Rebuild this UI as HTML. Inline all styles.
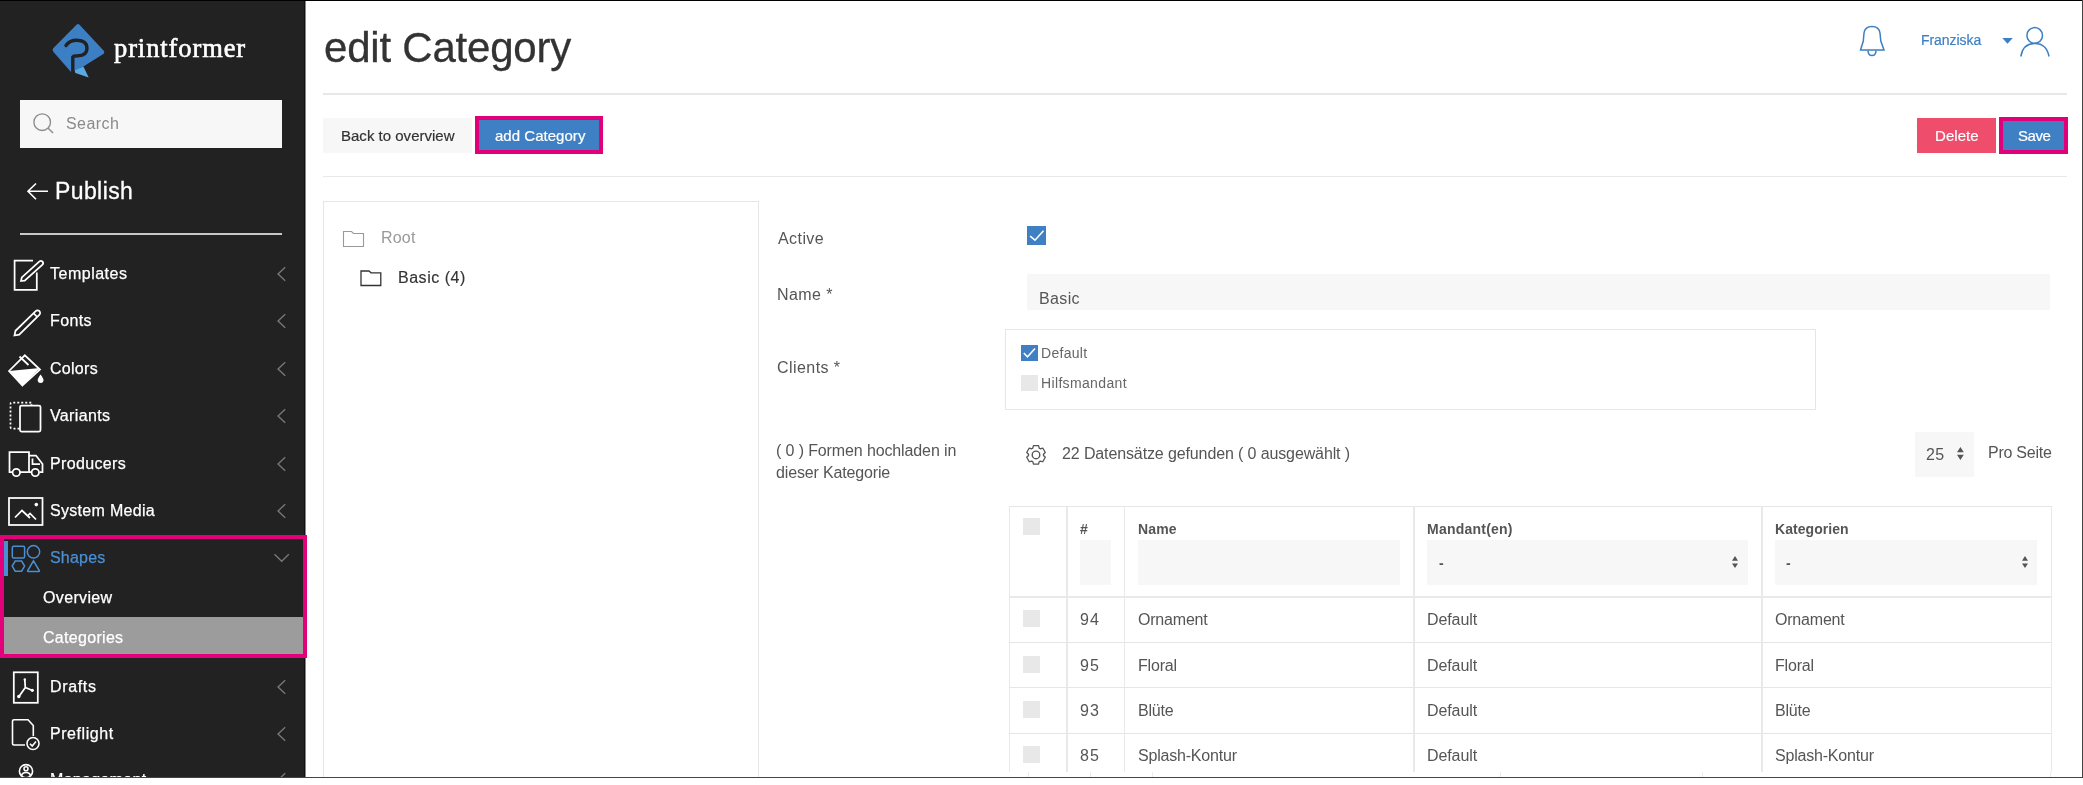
<!DOCTYPE html>
<html><head><meta charset="utf-8">
<style>
html,body{margin:0;padding:0;width:2083px;height:785px;overflow:hidden;background:#fff;}
body{position:relative;font-family:"Liberation Sans", sans-serif;}
.t{position:absolute;line-height:1;white-space:nowrap;will-change:transform;}
.r{position:absolute;}
svg.r{overflow:visible;}
</style></head><body>
<div class="r" style="left:0px;top:0px;width:304px;height:785px;background:#222;"></div>
<div class="r" style="left:304px;top:0px;width:1px;height:785px;background:#111;"></div>
<div class="r" style="left:305px;top:0px;width:1px;height:785px;background:#888;"></div>
<svg class="r" style="left:0;top:0" width="306" height="100" viewBox="0 0 306 100">
<path d="M76.5 24.8 Q78 23.3 79.5 24.8 L103.5 50.5 Q105.5 53 102.5 54.5 L83.4 66.6 L74.5 69.9 L71 72 L53.5 52 Q51.5 49.5 54 47.5 Z" fill="#3d7fc4"/>
<path d="M74.5 69.9 L83.4 66.6 L88.7 77.6 L75.4 73 Z" fill="#5aa8e4"/>
<path d="M66 45.5 Q69.5 40.3 77 40.3 Q86.8 40.5 87 48 Q87 55.6 78 55.8 Q73.5 55.8 72.8 57 L72.8 73" stroke="#222" stroke-width="3.4" fill="none" stroke-linecap="round"/>
</svg>
<div class="t" style="left:113.5px;top:35px;font-size:26.5px;color:#fff;font-weight:400;letter-spacing:0.9px;font-family:'Liberation Serif', serif;-webkit-text-stroke:0.6px #fff;">printformer</div>
<div class="r" style="left:20px;top:100px;width:262px;height:48px;background:#f7f7f7;"></div>
<svg class="r" style="left:30px;top:110px" width="30" height="30" viewBox="30 110 30 30">
<circle cx="42.2" cy="122.2" r="8.3" stroke="#8a8a8a" stroke-width="1.3" fill="none"/>
<path d="M48.2 128.2 L53 133" stroke="#8a8a8a" stroke-width="1.4" fill="none"/>
</svg>
<div class="t" style="left:66.1px;top:116px;font-size:16px;color:#8a8a8a;font-weight:400;letter-spacing:0.45px;font-family:'Liberation Sans', sans-serif;">Search</div>
<svg class="r" style="left:20px;top:175px" width="40" height="30" viewBox="20 175 40 30">
<path d="M48 191.3 L28.5 191.3 M36 183.5 L28 191.3 L36 199.3" stroke="#fff" stroke-width="1.6" fill="none"/>
</svg>
<div class="t" style="left:54.5px;top:180px;font-size:23px;color:#fff;font-weight:400;letter-spacing:0.4px;font-family:'Liberation Sans', sans-serif;-webkit-text-stroke:0.3px #fff">Publish</div>
<div class="r" style="left:20px;top:233px;width:262px;height:2px;background:#c8c8c8;"></div>
<div class="t" style="left:50px;top:266px;font-size:16px;color:#fff;font-weight:400;letter-spacing:0.5px;font-family:'Liberation Sans', sans-serif;-webkit-text-stroke:0.25px #fff">Templates</div>
<svg class="r" style="left:270px;top:264px" width="20" height="20" viewBox="270 264 20 20"><path d="M285.2 267.2 L278 274 L285.2 280.8" stroke="#7a7a7a" stroke-width="1.3" fill="none"/></svg>
<div class="t" style="left:50px;top:313px;font-size:16px;color:#fff;font-weight:400;letter-spacing:0.4px;font-family:'Liberation Sans', sans-serif;-webkit-text-stroke:0.25px #fff">Fonts</div>
<svg class="r" style="left:270px;top:311.4px" width="20" height="20" viewBox="270 311.4 20 20"><path d="M285.2 314.59999999999997 L278 321.4 L285.2 328.2" stroke="#7a7a7a" stroke-width="1.3" fill="none"/></svg>
<div class="t" style="left:50px;top:361px;font-size:16px;color:#fff;font-weight:400;letter-spacing:0.28px;font-family:'Liberation Sans', sans-serif;-webkit-text-stroke:0.25px #fff">Colors</div>
<svg class="r" style="left:270px;top:358.6px" width="20" height="20" viewBox="270 358.6 20 20"><path d="M285.2 361.8 L278 368.6 L285.2 375.40000000000003" stroke="#7a7a7a" stroke-width="1.3" fill="none"/></svg>
<div class="t" style="left:50px;top:408px;font-size:16px;color:#fff;font-weight:400;letter-spacing:0.35px;font-family:'Liberation Sans', sans-serif;-webkit-text-stroke:0.25px #fff">Variants</div>
<svg class="r" style="left:270px;top:406.1px" width="20" height="20" viewBox="270 406.1 20 20"><path d="M285.2 409.3 L278 416.1 L285.2 422.90000000000003" stroke="#7a7a7a" stroke-width="1.3" fill="none"/></svg>
<div class="t" style="left:50px;top:456px;font-size:16px;color:#fff;font-weight:400;letter-spacing:0.35px;font-family:'Liberation Sans', sans-serif;-webkit-text-stroke:0.25px #fff">Producers</div>
<svg class="r" style="left:270px;top:453.6px" width="20" height="20" viewBox="270 453.6 20 20"><path d="M285.2 456.8 L278 463.6 L285.2 470.40000000000003" stroke="#7a7a7a" stroke-width="1.3" fill="none"/></svg>
<div class="t" style="left:50px;top:503px;font-size:16px;color:#fff;font-weight:400;letter-spacing:0.3px;font-family:'Liberation Sans', sans-serif;-webkit-text-stroke:0.25px #fff">System Media</div>
<svg class="r" style="left:270px;top:500.70000000000005px" width="20" height="20" viewBox="270 500.70000000000005 20 20"><path d="M285.2 503.90000000000003 L278 510.70000000000005 L285.2 517.5" stroke="#7a7a7a" stroke-width="1.3" fill="none"/></svg>
<div class="t" style="left:50px;top:679px;font-size:16px;color:#fff;font-weight:400;letter-spacing:0.65px;font-family:'Liberation Sans', sans-serif;-webkit-text-stroke:0.25px #fff">Drafts</div>
<svg class="r" style="left:270px;top:676.8px" width="20" height="20" viewBox="270 676.8 20 20"><path d="M285.2 680.0 L278 686.8 L285.2 693.5999999999999" stroke="#7a7a7a" stroke-width="1.3" fill="none"/></svg>
<div class="t" style="left:50px;top:726px;font-size:16px;color:#fff;font-weight:400;letter-spacing:0.55px;font-family:'Liberation Sans', sans-serif;-webkit-text-stroke:0.25px #fff">Preflight</div>
<svg class="r" style="left:270px;top:723.8px" width="20" height="20" viewBox="270 723.8 20 20"><path d="M285.2 727.0 L278 733.8 L285.2 740.5999999999999" stroke="#7a7a7a" stroke-width="1.3" fill="none"/></svg>
<div class="t" style="left:50px;top:772px;font-size:16px;color:#fff;font-weight:400;letter-spacing:0.3px;font-family:'Liberation Sans', sans-serif;-webkit-text-stroke:0.25px #fff">Management</div>
<svg class="r" style="left:270px;top:770px" width="20" height="20" viewBox="270 770 20 20"><path d="M285.2 773.2 L278 780 L285.2 786.8" stroke="#7a7a7a" stroke-width="1.3" fill="none"/></svg>
<svg class="r" style="left:0;top:240px" width="60" height="545" viewBox="0 240 60 545">
<g stroke="#fff" stroke-width="1.75" fill="none">
<!-- templates -->
<path d="M33 260.7 L14.6 260.7 L14.6 289.9 L36.8 289.9 L36.8 272.5"/>
<path d="M21 281 L24.7 280.6 L42.5 264.6 A2.2 2.2 0 0 0 39.5 261.4 L21.8 277.4 Z"/>
<!-- fonts -->
<path d="M14.5 335.5 L19.2 334.6 L39.3 314.9 A2.6 2.6 0 0 0 35.7 311.1 L15.5 330.8 Z M33.5 313.2 L37.2 317"/>
<!-- colors bucket -->
<path d="M9 371 L24.8 355.3 L40 369.5 L22.4 385.6 Z"/>
<path d="M19.5 356.5 L28.5 365"/>
<!-- variants -->
<rect x="20" y="405.5" width="20.5" height="26" rx="1.5"/>
<path d="M19.5 428.5 L12 428.5 Q10.5 428.5 10.5 427 L10.5 404 Q10.5 402.5 12 402.5 L31.5 402.5 L31.5 405" stroke-dasharray="2 2"/>
<!-- producers truck -->
<path d="M12.5 472 L9.5 472 L9.5 452 L29 452 L29 472 L31 472 M20 472 L28 472"/>
<path d="M29 455.5 L36 455.5 L42.5 464 L42.5 472 L39.5 472"/>
<path d="M32.5 458.5 L32.5 464 L40 464"/>
<circle cx="16.3" cy="472.5" r="3.7"/>
<circle cx="35.3" cy="472.5" r="3.7"/>
<!-- system media -->
<rect x="9" y="498" width="33.5" height="27"/>
<path d="M15 517.5 L22 510.5 L30 518 M28 515.5 L30 513.5 L36 519.5"/>
<!-- drafts -->
<rect x="13.8" y="672.3" width="24" height="30.5"/>
<path d="M24.8 680 L25.3 687.5 L19 696.5 M25.3 687.5 L32 690.3"/>
</g><g fill="#fff"><circle cx="24.8" cy="679.5" r="1.2"/><circle cx="18.8" cy="696.5" r="1.7"/><circle cx="32.3" cy="690.3" r="1.6"/></g><g stroke="#fff" stroke-width="1.6" fill="none">
<!-- preflight -->
<path d="M25 745 L14 745 Q12.5 745 12.5 743.5 L12.5 721 Q12.5 719.8 14 719.8 L28 719.8 L33.3 725.5 L33.3 736"/>
<circle cx="33" cy="743.5" r="6"/>
<path d="M30 743.8 L32.2 746 L36 741.5"/>
<!-- management -->
<circle cx="26" cy="771.2" r="6.6"/>
<circle cx="26" cy="768.8" r="2"/>
<path d="M21.5 776 Q22 772.5 26 772.5 Q30 772.5 30.5 776"/>
</g>
<g fill="#fff">
<path d="M9 371 L40 368 L22.4 385.6 Z"/>
<path d="M40.6 374.5 Q43.5 378.5 43.5 380 A2.9 2.9 0 0 1 37.7 380 Q37.7 378.5 40.6 374.5 Z"/>
<circle cx="36.3" cy="504.6" r="1.8"/>
</g>
</svg>
<div class="r" style="left:0px;top:535px;width:307px;height:123px;background:transparent;border:4px solid #e3007b;box-sizing:border-box"></div>
<div class="r" style="left:4px;top:541px;width:4px;height:35px;background:#4a8fd4;"></div>
<svg class="r" style="left:0;top:540px" width="60" height="40" viewBox="0 540 60 40">
<g stroke="#4a8fd4" stroke-width="1.5" fill="none">
<rect x="12.3" y="546.2" width="12.3" height="11.8" rx="1.5"/>
<circle cx="33.5" cy="551.8" r="6.2"/>
<path d="M15.2 561 L21.6 561 L24.6 566 L21.6 571.2 L15.2 571.2 L12.2 566 Z"/>
<path d="M33.5 560.8 L39.4 570.8 Q39.6 571.5 38.8 571.5 L28.2 571.5 Q27.4 571.5 27.6 570.8 Z"/>
</g></svg>
<div class="t" style="left:50px;top:550px;font-size:16px;color:#4a8fd4;font-weight:400;letter-spacing:0.2px;font-family:'Liberation Sans', sans-serif;-webkit-text-stroke:0.25px #4a8fd4">Shapes</div>
<svg class="r" style="left:270px;top:545px" width="25" height="25" viewBox="270 545 25 25"><path d="M274.5 554.3 L281.7 561.3 L288.8 554.3" stroke="#7a7a7a" stroke-width="1.3" fill="none"/></svg>
<div class="t" style="left:43px;top:590px;font-size:16px;color:#fff;font-weight:400;letter-spacing:0.35px;font-family:'Liberation Sans', sans-serif;-webkit-text-stroke:0.25px #fff">Overview</div>
<div class="r" style="left:4px;top:617px;width:299px;height:37px;background:#9c9c9c;"></div>
<div class="t" style="left:43px;top:630px;font-size:16px;color:#fff;font-weight:400;letter-spacing:0.3px;font-family:'Liberation Sans', sans-serif;-webkit-text-stroke:0.25px #fff">Categories</div>
<div class="t" style="left:323.6px;top:27px;font-size:42px;color:#333;font-weight:400;letter-spacing:-0.21px;font-family:'Liberation Sans', sans-serif;-webkit-text-stroke:0.3px #333">edit Category</div>
<div class="r" style="left:323px;top:93px;width:1744px;height:2px;background:#e8e8e8;"></div>
<div class="r" style="left:323px;top:118px;width:149px;height:35px;background:#f7f7f7;"></div>
<div class="t" style="left:340.5px;top:128px;font-size:15px;color:#333;font-weight:400;letter-spacing:0.01px;font-family:'Liberation Sans', sans-serif;-webkit-text-stroke:0.2px #333">Back to overview</div>
<div class="r" style="left:475px;top:116px;width:128px;height:38px;background:#3f80c4;border:4px solid #e0007a;box-sizing:border-box"></div>
<div class="t" style="left:494.7px;top:128px;font-size:15px;color:#fff;font-weight:400;letter-spacing:0.03px;font-family:'Liberation Sans', sans-serif;-webkit-text-stroke:0.2px #fff">add Category</div>
<div class="r" style="left:1917px;top:118px;width:79px;height:35px;background:#ef4d6c;"></div>
<div class="t" style="left:1934.8px;top:128px;font-size:15px;color:#fff;font-weight:400;letter-spacing:0.06px;font-family:'Liberation Sans', sans-serif;-webkit-text-stroke:0.2px #fff">Delete</div>
<div class="r" style="left:1999px;top:117px;width:69px;height:37px;background:#3f80c4;border:4px solid #e0007a;box-sizing:border-box"></div>
<div class="t" style="left:2017.6px;top:128px;font-size:15px;color:#fff;font-weight:400;letter-spacing:-0.45px;font-family:'Liberation Sans', sans-serif;-webkit-text-stroke:0.2px #fff">Save</div>
<div class="r" style="left:323px;top:176px;width:1744px;height:1px;background:#e8e8e8;"></div>
<svg class="r" style="left:1850px;top:15px" width="220" height="50" viewBox="1850 15 220 50">
<g stroke="#3d7fc4" stroke-width="1.5" fill="none">
<path d="M1860.5 50 L1884 50 L1880.8 41 L1880 33 Q1879 26.5 1872 26.5 Q1865 26.5 1864 33 L1863.3 41 Z"/>
<path d="M1868 50.5 Q1868 55.5 1872 55.5 Q1876 55.5 1876 50.5"/>
<circle cx="2034.7" cy="35.4" r="7.8"/>
<path d="M2020.8 56.5 Q2023 43.5 2034.8 43.5 Q2046.6 43.5 2049 56.5"/>
</g>
<path d="M2002.3 38 L2012.8 38 L2007.5 43.8 Z" fill="#3d7fc4"/>
</svg>
<div class="t" style="left:1921px;top:33px;font-size:14px;color:#3d7fc4;font-weight:400;letter-spacing:-0.05px;font-family:'Liberation Sans', sans-serif;-webkit-text-stroke:0.2px #3d7fc4">Franziska</div>
<div class="r" style="left:323px;top:201px;width:436px;height:600px;background:#fff;border:1px solid #e6e6e6;box-sizing:border-box"></div>
<svg class="r" style="left:335px;top:220px" width="60" height="75" viewBox="335 220 60 75">
<path d="M343.5 246.5 L343.5 231.5 L351.5 231.5 L353.5 233.5 L363.5 233.5 L363.5 246.5 Z" stroke="#999" stroke-width="1.1" fill="none"/>
<path d="M361 285.5 L361 271 L369 271 L371 272.8 L380.8 272.8 L380.8 285.5 Z" stroke="#333" stroke-width="1.3" fill="none"/>
</svg>
<div class="t" style="left:381px;top:230px;font-size:16px;color:#999;font-weight:400;letter-spacing:0.2px;font-family:'Liberation Sans', sans-serif;">Root</div>
<div class="t" style="left:398px;top:270px;font-size:16px;color:#333;font-weight:400;letter-spacing:0.52px;font-family:'Liberation Sans', sans-serif;-webkit-text-stroke:0.15px #333">Basic (4)</div>
<div class="t" style="left:778px;top:231px;font-size:16px;color:#555;font-weight:400;letter-spacing:0.42px;font-family:'Liberation Sans', sans-serif;">Active</div>
<div class="r" style="left:1027px;top:226px;width:19px;height:19px;background:#3f80c4;"></div>
<svg class="r" style="left:1027px;top:226px" width="19" height="19" viewBox="1027 226 19 19"><path d="M1030.1 236.2 L1035 240.2 L1043.5 230.8" stroke="#fff" stroke-width="1.5" fill="none"/></svg>
<div class="t" style="left:777px;top:287px;font-size:16px;color:#555;font-weight:400;letter-spacing:0.44px;font-family:'Liberation Sans', sans-serif;">Name *</div>
<div class="r" style="left:1027px;top:274px;width:1023px;height:36px;background:#f7f7f7;"></div>
<div class="t" style="left:1039.1px;top:291px;font-size:16px;color:#555;font-weight:400;letter-spacing:0.37px;font-family:'Liberation Sans', sans-serif;">Basic</div>
<div class="t" style="left:777px;top:360px;font-size:16px;color:#555;font-weight:400;letter-spacing:0.44px;font-family:'Liberation Sans', sans-serif;">Clients *</div>
<div class="r" style="left:1005px;top:329px;width:811px;height:81px;background:#fff;border:1px solid #e6e6e6;box-sizing:border-box"></div>
<div class="r" style="left:1021px;top:345px;width:17px;height:16px;background:#3f80c4;"></div>
<svg class="r" style="left:1021px;top:345px" width="17" height="16" viewBox="1021 345 17 16"><path d="M1023.8 353 L1027.5 356.8 L1035 348.5" stroke="#fff" stroke-width="1.5" fill="none"/></svg>
<div class="t" style="left:1041px;top:346px;font-size:14px;color:#666;font-weight:400;letter-spacing:0.3px;font-family:'Liberation Sans', sans-serif;">Default</div>
<div class="r" style="left:1021px;top:375px;width:17px;height:16px;background:#e8e8e8;"></div>
<div class="t" style="left:1041px;top:376px;font-size:14px;color:#666;font-weight:400;letter-spacing:0.35px;font-family:'Liberation Sans', sans-serif;">Hilfsmandant</div>
<div class="t" style="left:775.9px;top:443px;font-size:16px;color:#555;font-weight:400;letter-spacing:-0.12px;font-family:'Liberation Sans', sans-serif;">( 0 ) Formen hochladen in</div>
<div class="t" style="left:775.9px;top:465px;font-size:16px;color:#555;font-weight:400;letter-spacing:-0.15px;font-family:'Liberation Sans', sans-serif;">dieser Kategorie</div>
<svg class="r" style="left:1020px;top:440px" width="32" height="32" viewBox="1020 440 32 32">
<path d="M1039.17 448.10 L1038.57 445.65 L1033.43 445.65 L1032.83 448.10 L1031.70 448.76 L1029.27 448.05 L1026.71 452.50 L1028.53 454.25 L1028.53 455.55 L1026.71 457.30 L1029.27 461.75 L1031.70 461.04 L1032.83 461.70 L1033.43 464.15 L1038.57 464.15 L1039.17 461.70 L1040.30 461.04 L1042.73 461.75 L1045.29 457.30 L1043.47 455.55 L1043.47 454.25 L1045.29 452.50 L1042.73 448.05 L1040.30 448.76 Z" stroke="#555" stroke-width="1.3" fill="none" stroke-linejoin="round"/>
<circle cx="1036" cy="454.9" r="3.8" stroke="#555" stroke-width="1.4" fill="none"/>
</svg>
<div class="t" style="left:1062.3px;top:446px;font-size:16px;color:#555;font-weight:400;letter-spacing:-0.12px;font-family:'Liberation Sans', sans-serif;">22 Datens&auml;tze gefunden ( 0 ausgew&auml;hlt )</div>
<div class="r" style="left:1915px;top:432px;width:59px;height:45px;background:#f7f7f7;"></div>
<div class="t" style="left:1926px;top:447px;font-size:16px;color:#555;font-weight:400;letter-spacing:0.3px;font-family:'Liberation Sans', sans-serif;">25</div>
<svg class="r" style="left:1950px;top:440px" width="20" height="30" viewBox="1950 440 20 30"><path d="M1957 452.2 L1960.4 447 L1963.8 452.2 Z M1957 454.8 L1960.4 460 L1963.8 454.8 Z" fill="#555"/></svg>
<div class="t" style="left:1988px;top:445px;font-size:16px;color:#555;font-weight:400;letter-spacing:-0.25px;font-family:'Liberation Sans', sans-serif;">Pro Seite</div>
<div class="r" style="left:1009px;top:506px;width:1043px;height:1px;background:#e6e6e6;"></div>
<div class="r" style="left:1009px;top:506px;width:1px;height:266px;background:#e9e9e9;"></div>
<div class="r" style="left:1066px;top:506px;width:2px;height:266px;background:#e9e9e9;"></div>
<div class="r" style="left:1124px;top:506px;width:1px;height:266px;background:#e9e9e9;"></div>
<div class="r" style="left:1413px;top:506px;width:2px;height:266px;background:#e9e9e9;"></div>
<div class="r" style="left:1761px;top:506px;width:2px;height:266px;background:#e9e9e9;"></div>
<div class="r" style="left:2051px;top:506px;width:1px;height:266px;background:#e9e9e9;"></div>
<div class="r" style="left:1009px;top:596px;width:1043px;height:2px;background:#e9e9e9;"></div>
<div class="r" style="left:1009px;top:642px;width:1043px;height:1px;background:#e6e6e6;"></div>
<div class="r" style="left:1009px;top:687px;width:1043px;height:1px;background:#e6e6e6;"></div>
<div class="r" style="left:1009px;top:733px;width:1043px;height:1px;background:#e6e6e6;"></div>
<div class="r" style="left:1023px;top:518px;width:17px;height:17px;background:#e8e8e8;"></div>
<div class="t" style="left:1079.8px;top:522px;font-size:14px;color:#555;font-weight:700;letter-spacing:0px;font-family:'Liberation Sans', sans-serif;">#</div>
<div class="t" style="left:1137.6px;top:522px;font-size:14px;color:#555;font-weight:700;letter-spacing:0.15px;font-family:'Liberation Sans', sans-serif;">Name</div>
<div class="t" style="left:1426.6px;top:522px;font-size:14px;color:#555;font-weight:700;letter-spacing:0.23px;font-family:'Liberation Sans', sans-serif;">Mandant(en)</div>
<div class="t" style="left:1774.6px;top:522px;font-size:14px;color:#555;font-weight:700;letter-spacing:0.05px;font-family:'Liberation Sans', sans-serif;">Kategorien</div>
<div class="r" style="left:1080px;top:540px;width:31px;height:45px;background:#f7f7f7;"></div>
<div class="r" style="left:1138px;top:540px;width:262px;height:45px;background:#f7f7f7;"></div>
<div class="r" style="left:1427px;top:540px;width:321px;height:45px;background:#f7f7f7;"></div>
<div class="r" style="left:1775px;top:540px;width:262px;height:45px;background:#f7f7f7;"></div>
<div class="t" style="left:1439px;top:556px;font-size:14px;color:#555;font-weight:700;letter-spacing:0px;font-family:'Liberation Sans', sans-serif;">-</div>
<div class="t" style="left:1786.4px;top:556px;font-size:14px;color:#555;font-weight:700;letter-spacing:0px;font-family:'Liberation Sans', sans-serif;">-</div>
<svg class="r" style="left:1728.9px;top:550px" width="12" height="24" viewBox="1728.9 550 12 24"><path d="M1731.9 560.7 L1734.9 556 L1737.9 560.7 Z M1731.9 563.4 L1734.9 568 L1737.9 563.4 Z" fill="#555"/></svg>
<svg class="r" style="left:2018.5px;top:550px" width="12" height="24" viewBox="2018.5 550 12 24"><path d="M2021.5 560.7 L2024.5 556 L2027.5 560.7 Z M2021.5 563.4 L2024.5 568 L2027.5 563.4 Z" fill="#555"/></svg>
<div class="r" style="left:1023px;top:610px;width:17px;height:17px;background:#e8e8e8;"></div>
<div class="t" style="left:1080px;top:612px;font-size:16px;color:#555;font-weight:400;letter-spacing:1.0px;font-family:'Liberation Sans', sans-serif;">94</div>
<div class="t" style="left:1137.5px;top:612px;font-size:16px;color:#555;font-weight:400;letter-spacing:-0.2px;font-family:'Liberation Sans', sans-serif;">Ornament</div>
<div class="t" style="left:1427px;top:612px;font-size:16px;color:#555;font-weight:400;letter-spacing:-0.1px;font-family:'Liberation Sans', sans-serif;">Default</div>
<div class="t" style="left:1774.5px;top:612px;font-size:16px;color:#555;font-weight:400;letter-spacing:-0.2px;font-family:'Liberation Sans', sans-serif;">Ornament</div>
<div class="r" style="left:1023px;top:656px;width:17px;height:17px;background:#e8e8e8;"></div>
<div class="t" style="left:1080px;top:658px;font-size:16px;color:#555;font-weight:400;letter-spacing:1.0px;font-family:'Liberation Sans', sans-serif;">95</div>
<div class="t" style="left:1137.5px;top:658px;font-size:16px;color:#555;font-weight:400;letter-spacing:-0.2px;font-family:'Liberation Sans', sans-serif;">Floral</div>
<div class="t" style="left:1427px;top:658px;font-size:16px;color:#555;font-weight:400;letter-spacing:-0.1px;font-family:'Liberation Sans', sans-serif;">Default</div>
<div class="t" style="left:1774.5px;top:658px;font-size:16px;color:#555;font-weight:400;letter-spacing:-0.2px;font-family:'Liberation Sans', sans-serif;">Floral</div>
<div class="r" style="left:1023px;top:701px;width:17px;height:17px;background:#e8e8e8;"></div>
<div class="t" style="left:1080px;top:703px;font-size:16px;color:#555;font-weight:400;letter-spacing:1.0px;font-family:'Liberation Sans', sans-serif;">93</div>
<div class="t" style="left:1137.5px;top:703px;font-size:16px;color:#555;font-weight:400;letter-spacing:-0.2px;font-family:'Liberation Sans', sans-serif;">Bl&uuml;te</div>
<div class="t" style="left:1427px;top:703px;font-size:16px;color:#555;font-weight:400;letter-spacing:-0.1px;font-family:'Liberation Sans', sans-serif;">Default</div>
<div class="t" style="left:1774.5px;top:703px;font-size:16px;color:#555;font-weight:400;letter-spacing:-0.2px;font-family:'Liberation Sans', sans-serif;">Bl&uuml;te</div>
<div class="r" style="left:1023px;top:746px;width:17px;height:17px;background:#e8e8e8;"></div>
<div class="t" style="left:1080px;top:748px;font-size:16px;color:#555;font-weight:400;letter-spacing:1.0px;font-family:'Liberation Sans', sans-serif;">85</div>
<div class="t" style="left:1137.5px;top:748px;font-size:16px;color:#555;font-weight:400;letter-spacing:-0.2px;font-family:'Liberation Sans', sans-serif;">Splash-Kontur</div>
<div class="t" style="left:1427px;top:748px;font-size:16px;color:#555;font-weight:400;letter-spacing:-0.1px;font-family:'Liberation Sans', sans-serif;">Default</div>
<div class="t" style="left:1774.5px;top:748px;font-size:16px;color:#555;font-weight:400;letter-spacing:-0.2px;font-family:'Liberation Sans', sans-serif;">Splash-Kontur</div>
<div class="r" style="left:1028px;top:772px;width:1px;height:5px;background:#ececec;"></div>
<div class="r" style="left:1090px;top:772px;width:1px;height:5px;background:#ececec;"></div>
<div class="r" style="left:1152px;top:772px;width:1px;height:5px;background:#ececec;"></div>
<div class="r" style="left:1500px;top:772px;width:1px;height:5px;background:#ececec;"></div>
<div class="r" style="left:1702px;top:772px;width:1px;height:5px;background:#ececec;"></div>
<div class="r" style="left:2050px;top:772px;width:1px;height:5px;background:#ececec;"></div>
<div class="r" style="left:0px;top:0px;width:2083px;height:1px;background:#000;"></div>
<div class="r" style="left:2082px;top:0px;width:1px;height:778px;background:#444;"></div>
<div class="r" style="left:0px;top:777px;width:2083px;height:1px;background:#444;"></div>
<div class="r" style="left:0px;top:778px;width:2083px;height:7px;background:#fff;"></div>
</body></html>
